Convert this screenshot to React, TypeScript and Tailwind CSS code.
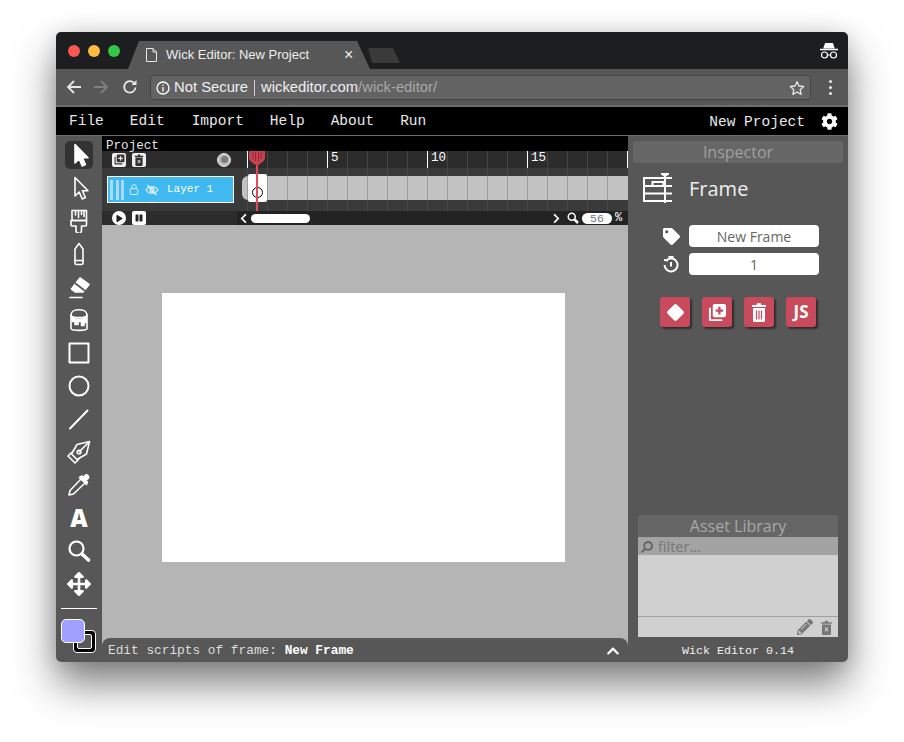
import { FaArrowsAlt, FaCog, FaTag, FaPencilAlt, FaPlay, FaPause, FaChevronUp, FaChevronLeft, FaChevronRight, FaSearch } from 'react-icons/fa'

const mono = "font-['Liberation_Mono',monospace]"

const cells = Array.from({ length: 19 }, (_, i) => i + 1)

function Ico({ children, size = 24, fill = 'none' }: { children: React.ReactNode; size?: number; fill?: string }) {
  return (
    <svg width={size} height={size} viewBox="0 0 24 24" fill={fill} stroke="white" strokeWidth={1.6} strokeLinejoin="round" strokeLinecap="round">
      {children}
    </svg>
  )
}

// stacked squares with a plus, used on the timeline and in the inspector
function AddIcon({ size, color, plus }: { size: number; color: string; plus: string }) {
  return (
    <svg width={size} height={size} viewBox="0 0 20 20">
      <path d="M1 5h2v12h12v2H2.500A1.500 1.500 0 0 1 1 17.500z" fill={color} />
      <rect x="5" y="1" width="14" height="14" rx="2" fill={color} />
      <path d="M12 4v8M8 8h8" stroke={plus} strokeWidth="2.400" />
    </svg>
  )
}

function BinIcon({ size, color, mark, bars = false }: { size: number; color: string; mark: string; bars?: boolean }) {
  return (
    <svg width={size} height={size} viewBox="0 0 16 20">
      <path d="M1 3h4.500l1-2h3l1 2H15v2H1zM2 6h12v12.500a1.500 1.500 0 0 1-1.500 1.500h-9A1.500 1.500 0 0 1 2 18.500z" fill={color} />
      {bars
        ? <path d="M5.500 8.500v9M8 8.500v9M10.500 8.500v9" stroke={mark} strokeWidth="1.200" />
        : <path d="M6 10l4 5M10 10l-4 5" stroke={mark} strokeWidth="1.500" />}
    </svg>
  )
}

const tools = [
  <Ico key="a" fill="white"><path d="M8 1.500V20l4.200-4 3 7 3.200-1.500-3-6.800H21z" /></Ico>,
  <Ico key="b"><path d="M8 1.500V20l4.200-4 3 7 3.200-1.500-3-6.800H21z" /></Ico>,
  <Ico key="c">
    <path d="M5 1.500h14.500v10H5z" />
    <path d="M4 11.500v4.500a1 1 0 0 0 1 1h4v4.500a2.500 2.500 0 0 0 5.500 0V17h4a1 1 0 0 0 1-1v-4.500z" />
    <path d="M8.500 1.500v4.500M11.500 1.500v7M14.500 1.500v4M17 1.500v6" />
  </Ico>,
  <Ico key="d">
    <path d="M12 1.500l4 5.500v14a1.500 1.500 0 0 1-1.500 1.500h-5A1.500 1.500 0 0 1 8 21V7z" />
    <path d="M8 18.500h8" />
  </Ico>,
  <Ico key="e">
    <path d="M3 22.500h12" />
    <path d="M13 3l9 6.500-6 7.500H8.500L4.500 14z" fill="white" />
    <path d="M8.500 8.500l9 7" stroke="#575757" />
  </Ico>,
  <Ico key="f">
    <path d="M4 7c0-7 16-7 16 0v13.500c0 2.500-16 2.500-16 0z" />
    <path d="M4 7c0 3.500 16 3.500 16 0" />
    <path d="M5 9.500c3 2.500 11 2.500 14 0v5h-2v3h-2.500v-4H11v3H8v-3H5z" fill="white" />
  </Ico>,
  <Ico key="g"><path d="M2.500 2.500h19v19h-19z" strokeWidth={2} /></Ico>,
  <Ico key="h"><circle cx="12" cy="12" r="9.500" strokeWidth={2} /></Ico>,
  <Ico key="i"><path d="M3 21.500L20.500 3.500" strokeWidth={2} /></Ico>,
  <Ico key="j">
    <path d="M22.500 1.500L10 4.500 4.500 14l5.500 5.500 9.500-5.500z" />
    <path d="M4.500 12.500L1 16l7 7 3.500-3.500M12.500 11.500L21.500 2.500" />
    <circle cx="12" cy="12" r="1.800" />
  </Ico>,
  <Ico key="k">
    <path d="M14 6L3 17.500 2 22l4.500-1L18 10" />
    <path d="M12.500 4.500l7 7 1-2.500-1.500-1.500 2.500-2.500c.5-2-1-3.500-3-3L16.500 4.500 15 3z" fill="white" />
  </Ico>,
  <span key="l" className="font-['Open_Sans',sans-serif] text-[24px] leading-none font-extrabold text-white">A</span>,
  <Ico key="m"><circle cx="9.500" cy="9.500" r="7" strokeWidth={2.200} /><path d="M15 15l6.500 6" strokeWidth={3.600} /></Ico>,
  <FaArrowsAlt key="n" className="text-white" size={24} />,
]

function ToolBar() {
  return (
    <aside className="w-[46px] shrink-0 bg-[#575757] flex flex-col items-center pt-[2px]">
      {tools.map((t, i) => (
        <div key={i} className="h-[33px] w-full flex items-center justify-center">
          <div className={`w-[28px] h-[28px] rounded-[5px] flex items-center justify-center ${i === 0 ? 'bg-[#333333]' : ''}`}>{t}</div>
        </div>
      ))}
      <div className="w-[36px] h-px bg-white mt-[8px]" />
      <div className="relative self-start ml-[5px] mt-[10px] w-[36px] h-[35px]">
        <div className="absolute left-[12px] top-[11px] w-[23px] h-[23px] rounded-[4px] bg-black border border-white p-[3px]">
          <div className="w-full h-full rounded-[2px] bg-[#575757] border border-white" />
        </div>
        <div className="absolute left-0 top-0 w-[24px] h-[24px] rounded-[5px] bg-[#a0a0ff] border border-white" />
      </div>
    </aside>
  )
}

function Timeline() {
  return (
    <div className="relative shrink-0">
      <div className={`h-[15px] bg-black text-[#e4e4e4] text-[12.600px] leading-[15px] pl-[4px] pt-[3px] ${mono}`}>Project</div>
      <div className="flex h-[17px] bg-[#2c2c2c]">
        <div className="w-[145px] flex items-center pl-[10px] gap-[6px] relative">
          <span className="w-[14px] h-[14px] bg-[#eeeeee] rounded-[2px] flex items-center justify-center"><AddIcon size={11} color="#333333" plus="#eeeeee" /></span>
          <span className="w-[14px] h-[14px] bg-[#eeeeee] rounded-[2px] flex items-center justify-center"><BinIcon size={12} color="#333333" mark="#eeeeee" /></span>
          <span className="ml-auto mr-[16px] w-[14px] h-[14px] rounded-full bg-[#bdbdbd] border border-[#e6e6e6] flex items-center justify-center"><span className="w-[7px] h-[7px] rounded-full bg-[#7a7a7a]" /></span>
        </div>
        <div className="flex">
          {cells.map(n => {
            const major = n === 1 || n % 5 === 0
            return (
              <div key={n} className={`w-[20px] border-l ${major ? 'border-white' : 'border-[#444444]'} text-white text-[12.600px] leading-[15px] pl-[3px] ${mono}`}>
                {n % 5 === 0 ? n : ''}
              </div>
            )
          })}
          <div className="w-px bg-white" />
        </div>
      </div>
      <div className="flex h-[43px] bg-[#3a3a3a]">
        <div className="w-[145px] pl-[5px] pt-[8px]">
          <div className="w-[127px] h-[27px] bg-[#40b8f0] border border-white flex items-center pl-[2px] text-white">
            <span className="w-[14px] h-[20px] flex justify-between">
              <span className="w-[3px] bg-[#a8dcf5]" /><span className="w-[3px] bg-[#a8dcf5]" /><span className="w-[3px] bg-[#a8dcf5]" />
            </span>
            <svg className="ml-[5px]" width="10" height="13" viewBox="0 0 12 14" fill="none" stroke="#d5f0fc" strokeWidth="1.200"><rect x="1.500" y="6" width="9" height="7" rx="1" /><path d="M3.500 6V3.500a2.500 2.500 0 0 1 5 0V6" /></svg>
            <svg className="ml-[6px]" width="14" height="12" viewBox="0 0 14 12" fill="none" stroke="#d5f0fc" strokeWidth="1.300"><path d="M1 6c3-4.500 9-4.500 12 0-3 4.500-9 4.500-12 0z" /><circle cx="7" cy="6" r="2" /><path d="M2.500 1L11.500 11" /></svg>
            <span className={`ml-[8px] text-[11px] ${mono}`}>Layer 1</span>
          </div>
        </div>
        <div className="relative">
          <div className="flex h-full absolute inset-0">
            {cells.map(n => <div key={n} className="w-[20px] shrink-0 border-l border-[#484848]" />)}
          </div>
          <div className="relative mt-[8px] ml-[-5px] h-[24px] w-[386px] bg-[#c2c2c2] rounded-l-[6px] flex pl-[5px]">
            {cells.map(n => <div key={n} className="w-[20px] shrink-0 border-l border-[#9c9c9c]" />)}
            <div className="absolute left-[6px] top-[-2px] w-[19px] h-[28px] bg-white rounded-[2px] flex items-center justify-center pt-[8px]">
              <span className="w-[11px] h-[11px] rounded-full border-[1.500px] border-black" />
            </div>
          </div>
        </div>
      </div>
      <div className="flex h-[14px] bg-[#2c2c2c] text-white">
        <div className="w-[135px] flex items-center pl-[10px] gap-[6px]">
          <span className="w-[14px] h-[14px] rounded-full bg-white flex items-center justify-center pl-[1px]"><FaPlay size={7} className="text-[#222]" /></span>
          <span className="w-[14px] h-[14px] rounded-[2px] bg-white flex items-center justify-center"><FaPause size={8} className="text-[#222]" /></span>
        </div>
        <div className="flex-1 bg-[#232323] flex items-center pl-[1px]">
          <FaChevronLeft size={11} />
          <span className="ml-[2px] w-[59px] h-[9px] rounded-full bg-white" />
          <FaChevronRight size={11} className="ml-[241px]" />
          <svg className="ml-[5px]" width="12" height="12" viewBox="0 0 24 24" fill="none" stroke="white"><circle cx="9.500" cy="9.500" r="7" strokeWidth="3" /><path d="M15 15l7 7" strokeWidth="5" /></svg>
          <span className={`ml-[3px] w-[30px] h-[11px] rounded-full bg-white text-[#777] text-[11.500px] leading-[11px] text-center ${mono}`}>56</span>
          <span className={`ml-[3px] text-[12px] ${mono}`}>%</span>
        </div>
      </div>
      {/* playhead */}
      <div className="absolute left-[154px] top-[15px] w-[2px] h-[60px] bg-[#e04a5a]" />
      <svg className="absolute left-[147px] top-[15px]" width="16" height="15" viewBox="0 0 16 15">
        <path d="M0 0h16v7c0 3-4 5-8 8-4-3-8-5-8-8z" fill="#c9404f" />
        <path d="M4 1v7M6.500 1v9M9.500 1v9M12 1v7" stroke="#8f2c38" />
      </svg>
    </div>
  )
}

function RedButton({ children }: { children: React.ReactNode }) {
  return (
    <button className="w-[30px] h-[30px] rounded-[3px] bg-[#c84a5c] shadow-[2px_2px_2px_#2e2e2e] flex items-center justify-center text-white">
      {children}
    </button>
  )
}

function Inspector() {
  return (
    <aside className="w-[220px] shrink-0 bg-[#575757] flex flex-col font-['Open_Sans',sans-serif]">
      <div className="mx-[5px] mt-[5px] h-[22px] rounded-[3px] bg-[#666666] text-center text-[#a0a0a0] text-[16px] leading-[22px]">Inspector</div>
      <div className="flex items-center mt-[10px] ml-[15px] h-[30px]">
        <svg width="31" height="30" viewBox="0 0 31 30" fill="none" stroke="white" strokeWidth="2">
          <path d="M0 5h29M0 13h29M0 20.500h29M0 28h29M1 5v23M9.500 13V9h11v4" />
          <path d="M22 1v29" />
          <path d="M18 0h8v1.500l-4 2.500-4-2.500z" fill="white" stroke="none" />
        </svg>
        <span className="ml-[15px] mt-[1px] text-[20px] text-[#eeeeee]">Frame</span>
      </div>
      <div className="mt-[22px] flex flex-col gap-[6px]">
        <div className="flex items-center">
          <FaTag size={17} className="ml-[35px] mt-[1px] text-white" />
          <div className="ml-[9px] pt-[1px] w-[130px] h-[22px] rounded-[4px] bg-white text-center text-[#666] text-[14px] leading-[22px]">New Frame</div>
        </div>
        <div className="flex items-center">
          <svg className="ml-[35px]" width="16" height="17" viewBox="0 0 16 17" fill="none" stroke="white" strokeWidth="2"><path d="M4 3.800A6.500 6.500 0 1 1 1.500 9" /><path d="M8 10.500V6M5.500 1h5" /><path d="M1 4l4 .5" /></svg>
          <div className="ml-[10px] pt-[1px] w-[130px] h-[22px] rounded-[4px] bg-white text-center text-[#666] text-[14px] leading-[22px]">1</div>
        </div>
      </div>
      <div className="mt-[22px] ml-[32px] flex gap-[12px]">
        <RedButton><span className="w-[13px] h-[13px] bg-white rounded-[2px] rotate-45" /></RedButton>
        <RedButton><AddIcon size={19} color="white" plus="#c84a5c" /></RedButton>
        <RedButton><BinIcon size={20} color="white" mark="#c84a5c" bars /></RedButton>
        <RedButton><span className="text-[17px] font-bold font-['Open_Sans',sans-serif]">JS</span></RedButton>
      </div>
      <div className="flex-1" />
      <div className="mx-[10px] flex flex-col">
        <div className="h-[22px] rounded-t-[3px] bg-[#666666] text-center text-[#a8a8a8] text-[16px] leading-[22px]">Asset Library</div>
        <div className="h-[18px] bg-[#a3a3a3] flex items-center pl-[3px] pt-[1px] text-[#777] text-[14.500px]">
          <FaSearch size={12} className="-scale-x-100 text-[#666]" />
          <span className="ml-[5px]">filter...</span>
        </div>
        <div className="h-[61px] bg-[#d0d0d0]" />
        <div className="h-[21px] bg-[#d0d0d0] border-t border-[#a0a0a0] flex items-center justify-end pr-[4px] gap-[6px] text-[#777]">
          <FaPencilAlt size={16} />
          <BinIcon size={15} color="#777777" mark="#d0d0d0" />
        </div>
      </div>
      <div className={`h-[25px] text-center text-[#f0f0f0] text-[11.700px] leading-[29px] ${mono}`}>Wick Editor 0.14</div>
    </aside>
  )
}

function BrowserChrome() {
  return (
    <>
      <div className="relative h-[37px] bg-[#1d1e20] flex items-center">
        <div className="flex gap-[8px] ml-[12px] mt-[1px]">
          <span className="w-[12px] h-[12px] rounded-full bg-[#fc5753]" />
          <span className="w-[12px] h-[12px] rounded-full bg-[#fdbc40]" />
          <span className="w-[12px] h-[12px] rounded-full bg-[#33c748]" />
        </div>
        <div className="absolute left-[72px] top-[9px] w-[242px] h-[28px] bg-[#575757] [clip-path:polygon(0_100%,11px_0,229px_0,100%_100%)] flex items-center pl-[18px] text-[#eeeeee] text-[13px] font-['Liberation_Sans',sans-serif]">
          <svg width="11" height="14" viewBox="0 0 11 14" fill="none" stroke="#e8e8e8" strokeWidth="1"><path d="M.5.500h6.500l3.500 3.500v9.500H.5zM7 .5V4h3.500" /></svg>
          <span className="ml-[9px]">Wick Editor: New Project</span>
          <span className="ml-[35px] text-[16px] leading-none">×</span>
        </div>
        <div className="absolute left-[312px] top-[16px] w-[32px] h-[15px] bg-[#3a3a3a] [clip-path:polygon(4px_100%,0_0,25px_0,100%_100%)]" />
        <svg className="absolute right-[9px] top-[10px]" width="20" height="18" viewBox="0 0 20 18" fill="none" stroke="white" strokeWidth="1.200">
          <path d="M5 6L6.500 1.500h7L15 6z" fill="white" />
          <path d="M1 7.500h18" strokeWidth="1.500" />
          <circle cx="5.500" cy="13" r="3" /><circle cx="14.500" cy="13" r="3" />
          <path d="M8.500 13h3" />
        </svg>
      </div>
      <div className="h-[36px] bg-[#575757] flex items-center text-white">
        <svg className="ml-[10px]" width="16" height="16" viewBox="0 0 16 16" fill="none" stroke="#e6e6e6" strokeWidth="1.800"><path d="M15 8H2M8 2L2 8l6 6" /></svg>
        <svg className="ml-[11px]" width="16" height="16" viewBox="0 0 16 16" fill="none" stroke="#808080" strokeWidth="1.800"><path d="M1 8h13M8 2l6 6-6 6" /></svg>
        <svg className="ml-[13px]" width="16" height="16" viewBox="0 0 16 16" fill="none" stroke="#e6e6e6" strokeWidth="1.800"><path d="M13.500 8.500A5.700 5.700 0 1 1 12 4" /><path d="M14.500 1v5h-5z" fill="#e6e6e6" stroke="none" /></svg>
        <div className="ml-[12px] mt-[1px] w-[661px] h-[25px] bg-[#636363] border border-[#454545] rounded-[3px] flex items-center pl-[5px] text-[14.800px] font-['Liberation_Sans',sans-serif]">
          <svg width="14" height="14" viewBox="0 0 14 14" fill="none" stroke="white" strokeWidth="1.300"><circle cx="7" cy="7" r="6" /><path d="M7 6v4.500M7 3.500v1.300" /></svg>
          <span className="ml-[4px] text-[#f0f0f0]">Not Secure</span>
          <span className="mx-[6px] w-px h-[16px] bg-[#cfcfcf]" />
          <span className="text-[#f0f0f0]">wickeditor.com</span>
          <span className="text-[#a8a8a8]">/wick-editor/</span>
          <svg className="ml-auto mr-[5px]" width="16" height="16" viewBox="0 0 24 24" fill="none" stroke="#e6e6e6" strokeWidth="2" strokeLinejoin="round"><path d="M12 2.500l3 6.500 7 .8-5.200 4.800 1.400 7L12 18l-6.200 3.600 1.400-7L2 9.800 9 9z" /></svg>
        </div>
        <span className="ml-[18px] flex flex-col gap-[3px]">
          <span className="w-[3px] h-[3px] rounded-full bg-[#e6e6e6]" />
          <span className="w-[3px] h-[3px] rounded-full bg-[#e6e6e6]" />
          <span className="w-[3px] h-[3px] rounded-full bg-[#e6e6e6]" />
        </span>
      </div>
      <div className="h-[2px] bg-[#6e6e6e]" />
    </>
  )
}

export default function App() {
  return (
    <div className="min-h-screen bg-white pt-[32px] px-[56px] h-[742px] overflow-hidden">
      <div className="w-[792px] h-[630px] rounded-[5px] overflow-hidden flex flex-col shadow-[0_22px_40px_rgba(0,0,0,0.5),0_0_20px_rgba(0,0,0,0.12)] mx-auto relative">
        <BrowserChrome />
        <div className={`h-[28px] bg-black flex items-center text-[14.500px] text-[#e8e8e8] pl-[13px] pt-[1px] ${mono}`}>
          <span>File</span>
          <span className="ml-[26px]">Edit</span>
          <span className="ml-[27px]">Import</span>
          <span className="ml-[26px]">Help</span>
          <span className="ml-[26px]">About</span>
          <span className="ml-[26px]">Run</span>
          <span className="ml-auto mt-[3px]">New Project</span>
          <FaCog size={17} className="ml-[16px] mr-[10px] text-white" />
        </div>
        <div className="h-px bg-[#6e6e6e]" />
        <div className="flex-1 flex min-h-0">
          <ToolBar />
          <div className="flex-1 flex flex-col min-w-0 bg-[#b5b5b5]">
            <Timeline />
            <div className="flex-1 pl-[60px] pt-[68px]">
              <div className="w-[403px] h-[269px] bg-white" />
            </div>
            <div className={`h-[24px] bg-[#575757] rounded-t-[8px] flex items-center pl-[6px] pr-[8px] pt-[2px] text-[12.800px] text-[#dddddd] ${mono}`}>
              <span>Edit scripts of frame: <b className="text-white">New Frame</b></span>
              <FaChevronUp size={14} className="ml-auto text-white" />
            </div>
          </div>
          <Inspector />
        </div>
      </div>
    </div>
  )
}
